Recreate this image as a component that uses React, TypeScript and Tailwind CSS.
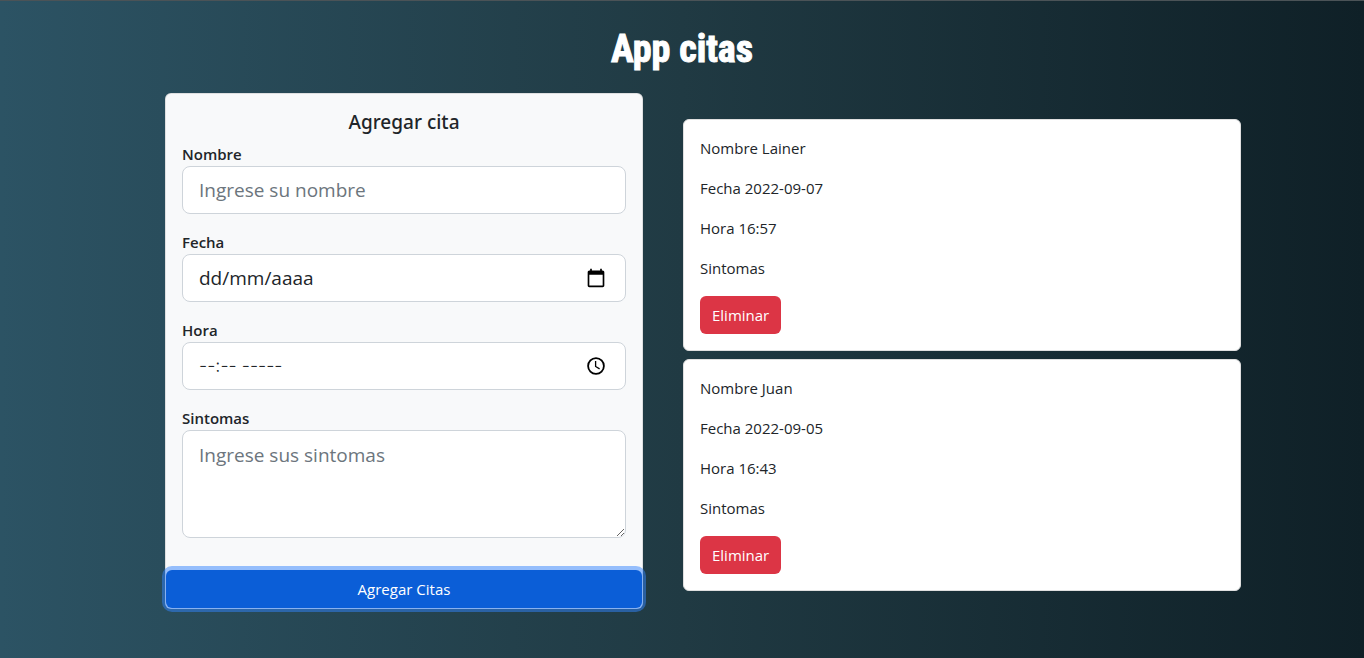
import React from 'react';

const field =
  'block w-full rounded-lg border border-[#ced4da] bg-white px-4 text-[19px] text-[#212529] placeholder:text-[#6c757d] outline-none';

const picker =
  'flex h-12 w-full items-center justify-between rounded-lg border border-[#ced4da] bg-white pr-[19px] pl-4 text-[19px] text-[#212529]';

function Field({ id, label, children }: { id: string; label: string; children: React.ReactNode }) {
  return (
    <div className="mb-4 flex flex-col">
      <label htmlFor={id} className="font-semibold">{label}</label>
      {children}
    </div>
  );
}

function CalendarIcon() {
  return (
    <svg viewBox="0 0 24 24" className="h-5 w-5 text-black" fill="currentColor" aria-hidden="true">
      <path d="M20 3h-1V1h-2v2H7V1H5v2H4c-1.1 0-2 .9-2 2v16c0 1.1.9 2 2 2h16c1.1 0 2-.9 2-2V5c0-1.1-.9-2-2-2zm0 18H4V8h16v13z" />
    </svg>
  );
}

function ClockIcon() {
  return (
    <svg viewBox="0 0 20 20" className="h-5 w-5 text-black" fill="none" stroke="currentColor" strokeWidth="1.8" aria-hidden="true">
      <circle cx="10" cy="10" r="7.9" />
      <path d="M9.6 5v5.5l4 2.4" strokeWidth="1.3" />
    </svg>
  );
}

const citas = [
  { nombre: 'Lainer', fecha: '2022-09-07', hora: '16:57', sintomas: '' },
  { nombre: 'Juan', fecha: '2022-09-05', hora: '16:43', sintomas: '' },
];

export default function App() {
  return (
    <div className="min-h-screen border-t border-[#4b5357] bg-linear-to-r from-[#2c5364] via-[#203a43] to-[#0f2027] px-6 pb-12 font-['Open_Sans','Noto_Sans',sans-serif] text-[15px] leading-6 text-[#212529]">
      <header className="flex h-23 items-center justify-center pt-1">
        <h1 className="font-['Roboto_Condensed','Roboto',sans-serif] text-[38px] font-bold text-white [-webkit-text-stroke:1px_white]">App citas</h1>
      </header>
      <main className="mx-auto grid max-w-[1118px] grid-cols-[478fr_558fr] items-start gap-10 pl-[42px]">
        <form className="rounded-md border border-black/10 bg-[#f8f9fa]" onSubmit={(e) => e.preventDefault()}>
          <div className="flow-root p-4">
            <h2 className="mb-2 text-center font-['Noto_Sans',sans-serif] text-[19px] leading-6 font-medium">Agregar cita</h2>
            <Field id="nombre" label="Nombre">
              <input id="nombre" type="text" placeholder="Ingrese su nombre" className={`${field} h-12`} />
            </Field>
            <Field id="fecha" label="Fecha">
              <div className={picker}>
                <input id="fecha" type="text" defaultValue="dd/mm/aaaa" className="min-w-0 flex-1 outline-none" />
                <CalendarIcon />
              </div>
            </Field>
            <Field id="hora" label="Hora">
              <div className={picker}>
                <input id="hora" type="text" defaultValue="--:-- -----" className="min-w-0 flex-1 font-['Inter',sans-serif] text-lg font-light outline-none" />
                <ClockIcon />
              </div>
            </Field>
            <Field id="sintomas" label="Sintomas">
              <textarea id="sintomas" placeholder="Ingrese sus sintomas" className={`${field} h-27 resize-y py-2 leading-8`} />
            </Field>
          </div>
          <button type="submit" className="block h-[38px] w-full rounded-md bg-[#0b5ed7] text-white ring-4 ring-[#3184fd]/50">Agregar Citas</button>
        </form>
        <section className="flex flex-col gap-2 pt-[26px]" aria-label="Citas">
          {citas.map((c) => (
            <article key={c.nombre} className="flex flex-col items-start gap-4 rounded-md border border-[#dfdfdf] bg-white p-4">
              <p>Nombre {c.nombre}</p>
              <p>Fecha {c.fecha}</p>
              <p>Hora {c.hora}</p>
              <p>Sintomas {c.sintomas}</p>
              <button type="button" className="rounded-md bg-[#dc3545] px-3 py-[7px] text-white">Eliminar</button>
            </article>
          ))}
        </section>
      </main>
    </div>
  );
}
